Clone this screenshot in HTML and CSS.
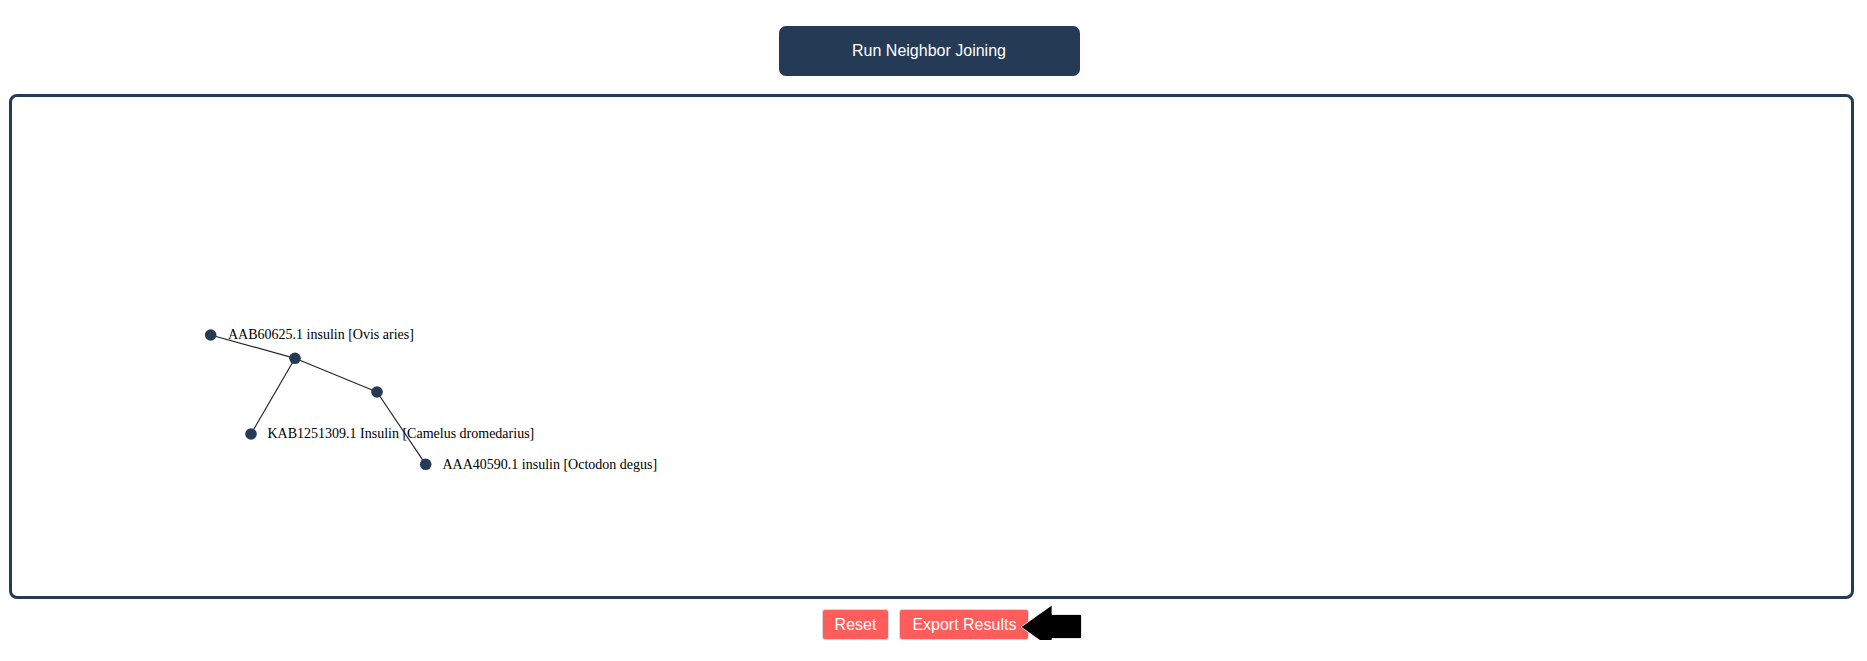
FILE: index.html
```html
<!DOCTYPE html>
<html>
<head>
<meta charset="utf-8">
<title>Neighbor Joining</title>
<link rel="stylesheet" href="styles.css">
</head>
<body>
<div class="top-row">
  <button class="run-btn">Run Neighbor Joining</button>
</div>
<div class="tree-box">
  <svg class="tree" width="1839" height="499" viewBox="0 0 1839 499">
    <g class="edges">
      <line x1="198.7" y1="238" x2="283" y2="261.3"/>
      <line x1="283" y1="261.3" x2="239" y2="337"/>
      <line x1="283" y1="261.3" x2="365" y2="295"/>
      <line x1="365" y1="295" x2="413.7" y2="367.3"/>
    </g>
    <g class="nodes">
      <circle cx="198.7" cy="238" r="5.8"/>
      <circle cx="283" cy="261.3" r="5.8"/>
      <circle cx="365" cy="295" r="5.8"/>
      <circle cx="239" cy="337" r="5.8"/>
      <circle cx="413.7" cy="367.3" r="5.8"/>
    </g>
    <g class="labels">
      <text x="216" y="242.3">AAB60625.1 insulin [Ovis aries]</text>
      <text x="255.5" y="341.3">KAB1251309.1 Insulin [Camelus dromedarius]</text>
      <text x="430.5" y="371.8">AAA40590.1 insulin [Octodon degus]</text>
    </g>
  </svg>
</div>
<div class="bottom-row">
  <button class="red-btn">Reset</button>
  <div class="export-wrap">
    <button class="red-btn">Export Results</button>
    <svg class="pointer" width="63" height="46" viewBox="0 0 63 46">
      <polygon points="1,23 32,1 32,10.5 61.5,10.5 61.5,34.5 32,34.5 32,45" />
    </svg>
  </div>
</div>
</body>
</html>
```
FILE: styles.css
```css
html, body {
  margin: 0;
  padding: 0;
  background: #ffffff;
  font-family: "Liberation Sans", Arial, sans-serif;
}

.top-row {
  display: flex;
  justify-content: center;
  padding-top: 26px;
  padding-right: 9px;
}

.run-btn {
  width: 301px;
  height: 50px;
  background: #243a55;
  color: #ffffff;
  border: none;
  border-radius: 7px;
  font-family: "Liberation Sans", Arial, sans-serif;
  font-size: 16px;
  padding: 0;
  cursor: pointer;
}

.tree-box {
  box-sizing: border-box;
  margin-top: 18px;
  margin-left: 9px;
  width: 1845px;
  height: 505px;
  border: 3px solid #243a55;
  border-radius: 8px;
  overflow: hidden;
}

.tree {
  display: block;
}

.edges line {
  stroke: #262626;
  stroke-width: 1.2;
}

.nodes circle {
  fill: #243a55;
}

.labels text {
  font-family: "Liberation Serif", "Times New Roman", serif;
  font-size: 14px;
  fill: #000000;
}

.bottom-row {
  display: flex;
  justify-content: center;
  gap: 10px;
  margin-top: 10px;
  padding-right: 16px;
}

.red-btn {
  background: #ff5c5c;
  color: #ffffff;
  border: 1px solid #d9d9d9;
  border-radius: 3px;
  font-family: "Liberation Sans", Arial, sans-serif;
  font-size: 16px;
  line-height: 17px;
  padding: 6px 12px;
  cursor: pointer;
}

.export-wrap {
  position: relative;
  display: flex;
}

.pointer {
  position: absolute;
  left: calc(100% - 9px);
  top: -5px;
}

.pointer polygon {
  fill: #000000;
  stroke: #ffffff;
  stroke-width: 0.8;
}
```
